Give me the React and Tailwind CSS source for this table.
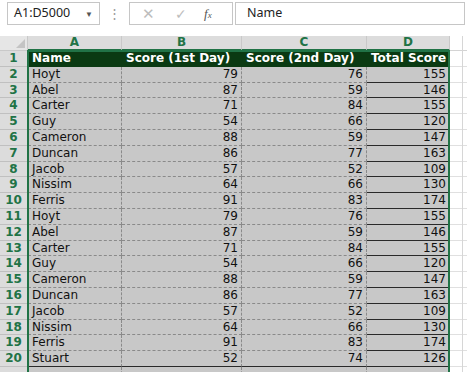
import React from "react";

const base = [
  ["Hoyt", 79, 76, 155],
  ["Abel", 87, 59, 146],
  ["Carter", 71, 84, 155],
  ["Guy", 54, 66, 120],
  ["Cameron", 88, 59, 147],
  ["Duncan", 86, 77, 163],
  ["Jacob", 57, 52, 109],
  ["Nissim", 64, 66, 130],
  ["Ferris", 91, 83, 174],
];

const rows = [...base, ...base, ["Stuart", 52, 74, 126], ["", "", "", ""]];

const cell = "h-[15.8px] leading-[15px] bg-[#c8c8c8] border-b border-r border-dashed border-r-[#8a8a8a] text-[#111]";

export default function App() {
  return (
    <div className="w-[467px] h-[372px] overflow-hidden bg-white font-['DejaVu_Sans',sans-serif] text-[12px]">
      {/* formula bar */}
      <div className="flex items-start h-[36px] pt-[2px] font-['Noto_Sans',sans-serif] text-[12px] text-[#222]">
        <div className="ml-[7px] w-[93px] h-[23px] border border-[#c6c6c6] flex items-center justify-between pl-[6px] pr-[6px]">
          <span className="text-[12.5px]">A1:D5000</span>
          <span className="text-[8px] text-[#555]">▼</span>
        </div>
        <div className="w-[29px] h-[23px] flex items-center justify-center text-[#9a9a9a] text-[13px]">⋮</div>
        <div className="w-[104px] h-[23px] border border-[#c6c6c6] flex items-center">
          <span className="ml-[12px] text-[#bdbdbd] text-[15px] leading-none">✕</span>
          <span className="ml-[20px] text-[#bdbdbd] text-[14px] leading-none">✓</span>
          <span className="ml-[17px] text-[#555] italic font-['Liberation_Serif',serif] text-[13px]">f<span className="text-[9px]">x</span></span>
        </div>
        <div className="ml-[2px] w-[230px] h-[23px] border border-[#c6c6c6] flex items-center pl-[11px] text-[12.5px]">Name</div>
      </div>

      {/* sheet */}
      <div className="relative grid grid-cols-[28px_94px_120px_125px_83px_1fr]">
        {/* column headers */}
        <div className="h-[15px] bg-[#e6e6e6] border-r border-b border-[#c9c9c9] relative">
          <div className="absolute right-[2px] bottom-[2px] w-0 h-0 border-l-[9px] border-l-transparent border-b-[9px] border-b-[#c4c4c4]" />
        </div>
        {["A", "B", "C", "D"].map((c) => (
          <div
            key={c}
            className="h-[15px] bg-[#dcdcdc] border-r border-[#c9c9c9] border-b-2 border-b-[#217346] text-center font-bold text-[#217346] leading-[13px]"
          >
            {c}
          </div>
        ))}
        <div className="h-[15px] bg-white border-b border-[#d4d4d4]" />

        {/* header row */}
        <div className="h-[15.8px] bg-[#dcdcdc] border-b border-r border-[#c0c0c0] text-center font-bold text-[#217346] leading-[15px]">1</div>
        {["Name", "Score (1st Day)", "Score (2nd Day)", "Total Score"].map((h) => (
          <div key={h} className="h-[15.8px] bg-[#0a3a12] text-white font-bold pl-[4px] leading-[15px] whitespace-nowrap overflow-hidden">
            {h}
          </div>
        ))}
        <div className="h-[15.8px] border-b border-[#e0e0e0]" />

        {rows.map((r, i) => {
          const last = i === 18;
          const rowLine = last ? "border-b-[#2a2a2a] [border-bottom-style:solid]" : "border-b-[#8a8a8a]";
          return (
            <React.Fragment key={i}>
              <div className="h-[15.8px] bg-[#dcdcdc] border-b border-r border-[#c0c0c0] text-center font-bold text-[#217346] leading-[15px]">
                {r[0] ? i + 2 : ""}
              </div>
              <div className={`${cell} ${rowLine} pl-[4px]`}>{r[0]}</div>
              <div className={`${cell} ${rowLine} text-right pr-[3px]`}>{r[1]}</div>
              <div className={`${cell} ${rowLine} text-right pr-[3px]`}>{r[2]}</div>
              <div className="h-[15.8px] leading-[15px] bg-[#c8c8c8] border-b border-b-[#2a2a2a] text-right pr-[4px] text-[#111]">{r[3]}</div>
              <div className="h-[15.8px] border-b border-[#e0e0e0] bg-white" />
            </React.Fragment>
          );
        })}

        {/* selection outline */}
        <div className="absolute left-[27px] top-[14px] w-[423px] h-[400px] border-2 border-[#217346] pointer-events-none" />
        <div className="absolute left-[462px] top-0 w-px h-[400px] bg-[#d6d6d6]" />
      </div>
    </div>
  );
}
